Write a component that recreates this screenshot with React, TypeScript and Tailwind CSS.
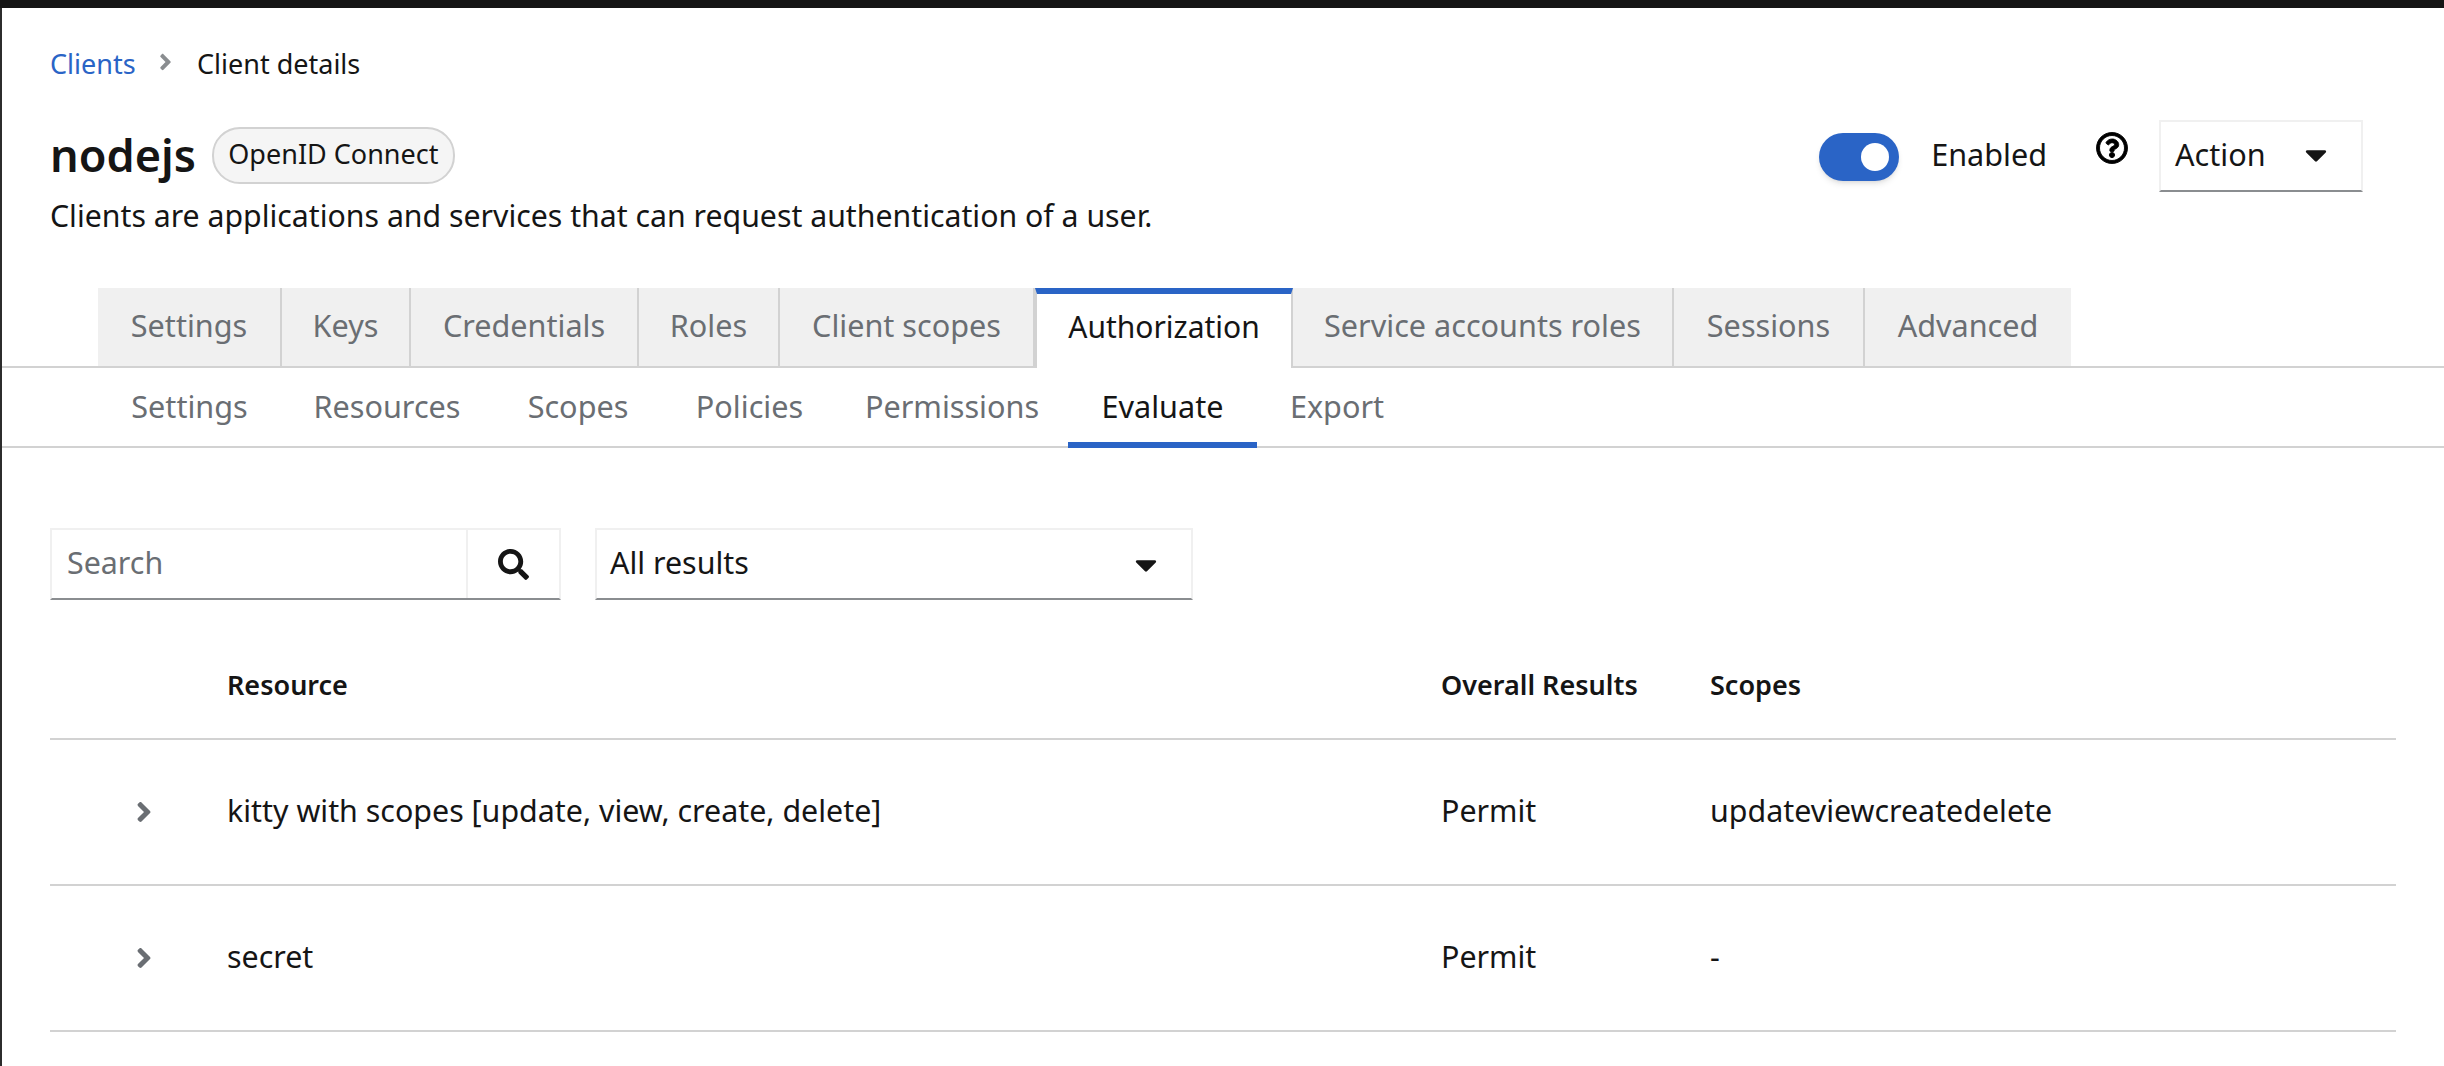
import React from "react";
import { FaAngleRight, FaCaretDown, FaRegQuestionCircle, FaSearch } from "react-icons/fa";

const clientTabs = [
  { label: "Settings", width: "w-[184px]" },
  { label: "Keys", width: "w-[129px]" },
  { label: "Credentials", width: "w-[228px]" },
  { label: "Roles", width: "w-[141px]" },
  { label: "Client scopes", width: "w-[255px]" },
  { label: "Authorization", width: "w-[258px]", active: true },
  { label: "Service accounts roles", width: "w-[381px]" },
  { label: "Sessions", width: "w-[191px]" },
  { label: "Advanced", width: "w-[206px]" },
];

const authTabs = [
  { label: "Settings", width: "w-[183px]" },
  { label: "Resources", width: "w-[212px]" },
  { label: "Scopes", width: "w-[170px]" },
  { label: "Policies", width: "w-[173px]" },
  { label: "Permissions", width: "w-[232px]" },
  { label: "Evaluate", width: "w-[189px]", active: true },
  { label: "Export", width: "w-[160px]" },
];

const results = [
  { resource: "kitty with scopes [update, view, create, delete]", overall: "Permit", scopes: "updateviewcreatedelete" },
  { resource: "secret", overall: "Permit", scopes: "-" },
];

export default function App() {
  return (
    <div className="h-screen w-full overflow-hidden bg-white font-['Noto_Sans',sans-serif] text-[30.4px] text-[#151515]">
      {/* barra escura do topo */}
      <div className="h-2 bg-[#151515]" />

      <div className="h-[1058px] border-l-2 border-[#2c2c2c] pt-[37px]">
        {/* Breadcrumb */}
        <nav className="ml-[48px] flex h-[38px] items-center text-[27px]">
          <a className="w-[87px] text-[#2a64c6]">Clients</a>
          <FaAngleRight className="mb-1 ml-[22px] h-[26px] w-[13px] text-[#8a8d90]" />
          <span className="ml-[25px]">Client details</span>
        </nav>

        {/* Cabeçalho */}
        <header className="mt-[37px] flex justify-between pl-[48px] pr-[81px]">
          <div>
            <div className="mt-[7px] flex h-[57px] items-center">
              <h1 className="pb-[2px] text-[45px] font-semibold">nodejs</h1>
              <span className="ml-[16px] flex h-[57px] w-[243px] items-center justify-center rounded-[28px] border-2 border-[#d2d2d2] bg-[#f5f5f5] pb-[2px] text-[27px]">
                OpenID Connect
              </span>
            </div>
            <p className="mt-[13px] h-[38px] text-[30.25px] leading-[37px]">
              Clients are applications and services that can request authentication of a user.
            </p>
          </div>

          <div className="flex h-[72px] items-center">
            <span className="relative mt-0.5 h-[48px] w-[80px] rounded-full bg-[#2a64c6] shadow-md">
              <span className="absolute right-[10px] top-[10px] h-[28px] w-[28px] rounded-full bg-white" />
            </span>
            <span className="ml-[32px] pb-[3px] text-[30.6px]">Enabled</span>
            <FaRegQuestionCircle stroke="currentColor" strokeWidth={14} className="mb-4 ml-[49px] h-[32px] w-[32px] text-black" />
            <button className="ml-[31px] flex h-[72px] w-[204px] items-center justify-between border-2 border-[#f0f0f0] border-b-[#8a8d90] pb-[3px] pl-[14px] pr-[34px] text-[30.6px]">
              Action
              <FaCaretDown className="h-[35px] w-[22px]" />
            </button>
          </div>
        </header>

        {/* Abas do cliente */}
        <div className="mt-[53px] flex h-[80px] border-b-2 border-[#d2d2d2] pl-[96px] text-[30.6px] text-[#6a6e73]">
          {clientTabs.map((tab) =>
            tab.active ? (
              <div
                key={tab.label}
                className={`${tab.width} z-10 -mb-0.5 flex h-[80px] items-center justify-center border-x-2 border-t-[6px] border-x-[#d2d2d2] border-t-[#2a64c6] bg-white pb-[9px] text-[30px] text-[#151515]`}
              >
                {tab.label}
              </div>
            ) : (
              <div
                key={tab.label}
                className={`${tab.width} flex h-[78px] items-center justify-center border-r-2 border-[#d2d2d2] bg-[#f0f0f0] pb-[3px] last:border-r-0`}
              >
                {tab.label}
              </div>
            )
          )}
        </div>

        {/* Sub abas de autorização */}
        <div className="flex h-[80px] border-b-2 border-[#d2d2d2] pl-[96px] text-[30.6px] text-[#6a6e73]">
          {authTabs.map((tab) => (
            <div
              key={tab.label}
              className={`${tab.width} flex h-[80px] items-center justify-center ${
                tab.active ? "border-b-[6px] border-[#2a64c6] pt-[3px] text-[#151515]" : "pb-[3px]"
              }`}
            >
              {tab.label}
            </div>
          ))}
        </div>

        {/* Toolbar */}
        <div className="ml-[48px] mt-[80px] flex h-[72px]">
          <div className="flex h-[72px] w-[511px] border-2 border-[#f0f0f0] border-b-[#8a8d90]">
            <input
              placeholder="Search"
              className="h-full w-[416px] border-r-2 border-[#f0f0f0] pb-[3px] pl-[15px] outline-none placeholder:text-[#6a6e73]"
            />
            <button className="flex flex-1 items-center justify-center">
              <FaSearch className="h-[31px] w-[31px]" />
            </button>
          </div>
          <button className="ml-[34px] flex h-[72px] w-[598px] items-center justify-between border-2 border-[#f0f0f0] border-b-[#8a8d90] pl-[13px] pr-[34px]">
            <span className="pb-[3px]">All results</span>
            <FaCaretDown className="h-[35px] w-[22px]" />
          </button>
        </div>

        {/* Tabela de resultados */}
        <table className="ml-[48px] mt-[40px] w-[2346px] table-fixed border-separate border-spacing-0">
          <thead>
            <tr className="h-[100px] text-left text-[27px]">
              <th className="w-[177px] border-b-2 border-[#d2d2d2]" />
              <th className="w-[1214px] border-b-2 border-[#d2d2d2] pb-[8px] font-semibold">Resource</th>
              <th className="w-[269px] border-b-2 border-[#d2d2d2] pb-[8px] font-semibold">Overall Results</th>
              <th className="border-b-2 border-[#d2d2d2] pb-[8px] font-semibold">Scopes</th>
            </tr>
          </thead>
          <tbody>
            {results.map((row) => (
              <tr key={row.resource} className="h-[146px]">
                <td className="border-b-2 border-[#d2d2d2]">
                  <FaAngleRight className="ml-[86px] h-[32px] w-[16px] text-[#6a6e73]" />
                </td>
                <td className="border-b-2 border-[#d2d2d2] pb-[3px]">{row.resource}</td>
                <td className="border-b-2 border-[#d2d2d2] pb-[3px]">{row.overall}</td>
                <td className="border-b-2 border-[#d2d2d2] pb-[3px]">{row.scopes}</td>
              </tr>
            ))}
          </tbody>
        </table>
      </div>
    </div>
  );
}
